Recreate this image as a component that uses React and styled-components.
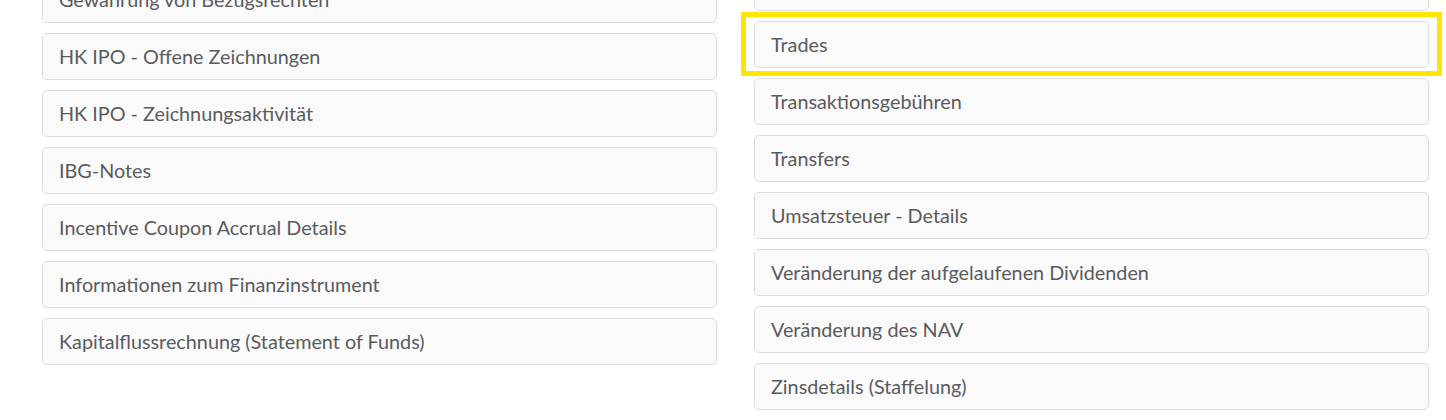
import React from 'react';
import styled, { createGlobalStyle } from 'styled-components';

const GlobalStyle = createGlobalStyle`
  html, body {
    margin: 0;
    padding: 0;
    background: #ffffff;
    overflow: hidden;
  }
  body {
    font-family: Lato, "Open Sans", "Liberation Sans", sans-serif;
  }
`;

const Page = styled.div`
  display: grid;
  grid-template-columns: 675px 675px;
  column-gap: 37px;
  padding: 0 17px 0 42px;
  height: 420px;
  overflow: hidden;
`;

const Column = styled.div`
  display: flex;
  flex-direction: column;
  gap: 10px;
  margin-top: ${(props) => props.offset}px;
`;

const Item = styled.div`
  position: relative;
  box-sizing: border-box;
  height: 47px;
  display: flex;
  align-items: center;
  padding: 0 16px 2px;
  background: #fafafa;
  border: 1px solid #dcdcdc;
  border-radius: 5px;
  color: #5a5b5e;
  font-size: 19.8px;
  white-space: nowrap;

  ${(props) =>
    props.highlighted &&
    `
    &::after {
      content: '';
      position: absolute;
      top: -10px;
      left: -14px;
      right: -14px;
      bottom: -9px;
      border: 5px solid #ffe500;
      pointer-events: none;
    }
  `}
`;

const leftItems = [
  'Gewährung von Bezugsrechten',
  'HK IPO - Offene Zeichnungen',
  'HK IPO - Zeichnungsaktivität',
  'IBG-Notes',
  'Incentive Coupon Accrual Details',
  'Informationen zum Finanzinstrument',
  'Kapitalflussrechnung (Statement of Funds)',
];

const rightItems = [
  'Steuerdaten',
  'Trades',
  'Transaktionsgebühren',
  'Transfers',
  'Umsatzsteuer - Details',
  'Veränderung der aufgelaufenen Dividenden',
  'Veränderung des NAV',
  'Zinsdetails (Staffelung)',
];

function App() {
  return (
    <>
      <GlobalStyle />
      <Page>
        <Column offset={-24}>
          {leftItems.map((label) => (
            <Item key={label}>{label}</Item>
          ))}
        </Column>
        <Column offset={-36}>
          {rightItems.map((label) => (
            <Item key={label} highlighted={label === 'Trades'}>
              {label}
            </Item>
          ))}
        </Column>
      </Page>
    </>
  );
}

export default App;
